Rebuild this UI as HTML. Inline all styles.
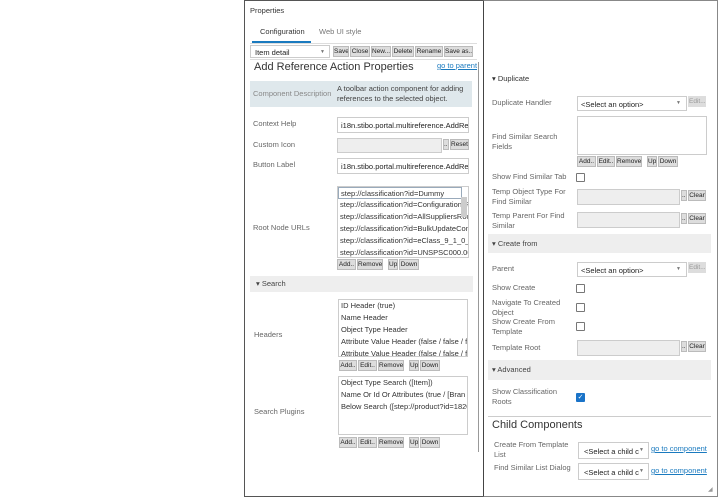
<!DOCTYPE html>
<html><head><meta charset="utf-8"><style>
*{box-sizing:border-box;margin:0;padding:0}
body{width:718px;height:497px;background:#fff;position:relative;overflow:hidden;font-family:"Liberation Sans",sans-serif;font-size:7.5px;color:#333}
.a{position:absolute;white-space:nowrap}
.lbl{position:absolute;color:#666;font-size:7.5px;line-height:10px;white-space:nowrap}
.inp{position:absolute;border:1px solid #ccc;background:#fff;font-size:7.5px;padding:3px 3px;line-height:9px;overflow:hidden;white-space:nowrap;color:#222}
.dis{background:#eee}
.btn{position:absolute;background:#ddd;border:1px solid #bbb;font-size:6.5px;line-height:9px;text-align:center;color:#222;height:11px;white-space:nowrap;overflow:hidden}
.hdr{position:absolute;background:#eee;color:#444;font-size:7.5px}
.cb{position:absolute;width:9px;height:9px;border:1px solid #777;border-radius:1px;background:#fff}
.lnk{position:absolute;color:#1a7abf;text-decoration:underline;font-size:7.5px;white-space:nowrap}
.list div{height:12px;line-height:12px;padding-left:2px;white-space:nowrap}
.arr{position:absolute;font-size:5px;color:#777}
</style></head><body>
<div class="a" style="left:244px;top:0;width:240px;height:497px;border:1px solid #555;border-right:1px solid #444"></div>
<div class="a" style="left:483px;top:0;width:235px;height:497px;border:1px solid #888;border-left:1px solid #444"></div>
<div class="a" style="left:478px;top:62px;width:1px;height:390px;background:#999"></div>

<div class="a" style="left:250px;top:6px">Properties</div>
<div class="a" style="left:260px;top:27px">Configuration</div>
<div class="a" style="left:319px;top:27px;color:#777">Web UI style</div>
<div class="a" style="left:252px;top:41px;width:59px;height:2px;background:#1a7abf"></div>
<div class="a" style="left:250px;top:43px;width:227px;height:1px;background:#ddd"></div>

<div class="inp" style="left:250px;top:45px;width:80px;height:13px;padding:2px 4px">Item detail</div>
<div class="arr" style="left:320px;top:49px">▼</div>
<div class="btn" style="left:333px;top:46px;width:16px">Save</div>
<div class="btn" style="left:350px;top:46px;width:20px">Close</div>
<div class="btn" style="left:371px;top:46px;width:20px">New...</div>
<div class="btn" style="left:392px;top:46px;width:22px">Delete</div>
<div class="btn" style="left:415px;top:46px;width:28px">Rename</div>
<div class="btn" style="left:444px;top:46px;width:29px">Save as...</div>
<div class="a" style="left:250px;top:59px;width:227px;height:1px;background:#ddd"></div>

<div class="a" style="left:254px;top:61px;font-size:11px;color:#333">Add Reference Action Properties</div>
<div class="lnk" style="left:437px;top:61px">go to parent</div>

<div class="a" style="left:250px;top:81px;width:222px;height:26px;background:#dfe8ec"></div>
<div class="lbl" style="left:253px;top:89px;color:#888">Component Description</div>
<div class="a" style="left:337px;top:84px;line-height:10px;color:#444">A toolbar action component for adding<br>references to the selected object.</div>

<div class="lbl" style="left:253px;top:119px">Context Help</div>
<div class="inp" style="left:337px;top:117px;width:132px;height:16px">i18n.stibo.portal.multireference.AddRefe</div>
<div class="lbl" style="left:253px;top:140px">Custom Icon</div>
<div class="inp dis" style="left:337px;top:138px;width:105px;height:15px"></div>
<div class="btn" style="left:443px;top:139px;width:6px">...</div>
<div class="btn" style="left:450px;top:139px;width:19px">Reset</div>
<div class="lbl" style="left:253px;top:160px">Button Label</div>
<div class="inp" style="left:337px;top:158px;width:132px;height:16px">i18n.stibo.portal.multireference.AddRefe</div>

<div class="lbl" style="left:253px;top:223px">Root Node URLs</div>
<div class="a list" style="left:337px;top:186px;width:132px;height:72px;border:1px solid #ccc;overflow:hidden">
<div style="border:1px solid #9ab;width:124px">step://classification?id=Dummy</div>
<div>step://classification?id=ConfigurationsR</div>
<div>step://classification?id=AllSuppliersRoot</div>
<div>step://classification?id=BulkUpdateConf</div>
<div>step://classification?id=eClass_9_1_0_0</div>
<div>step://classification?id=UNSPSC000.000</div>
</div>
<div class="a" style="left:461px;top:197px;width:6px;height:20px;background:#ccc"></div>
<div class="btn" style="left:337px;top:259px;width:19px">Add..</div>
<div class="btn" style="left:357px;top:259px;width:26px">Remove</div>
<div class="btn" style="left:388px;top:259px;width:10px">Up</div>
<div class="btn" style="left:399px;top:259px;width:20px">Down</div>

<div class="hdr" style="left:250px;top:276px;width:223px;height:16px;padding:3px 6px">▾ Search</div>

<div class="lbl" style="left:254px;top:330px">Headers</div>
<div class="a list" style="left:338px;top:299px;width:130px;height:58px;border:1px solid #ccc;overflow:hidden">
<div>ID Header (true)</div><div>Name Header</div><div>Object Type Header</div><div>Attribute Value Header (false / false / f</div><div>Attribute Value Header (false / false / f</div></div>
<div class="btn" style="left:339px;top:360px;width:18px">Add..</div>
<div class="btn" style="left:358px;top:360px;width:19px">Edit..</div>
<div class="btn" style="left:378px;top:360px;width:26px">Remove</div>
<div class="btn" style="left:409px;top:360px;width:10px">Up</div>
<div class="btn" style="left:420px;top:360px;width:20px">Down</div>

<div class="lbl" style="left:254px;top:407px">Search Plugins</div>
<div class="a list" style="left:338px;top:376px;width:130px;height:59px;border:1px solid #ccc;overflow:hidden">
<div>Object Type Search ([Item])</div><div>Name Or Id Or Attributes (true / [Bran</div><div>Below Search ([step://product?id=1820</div></div>
<div class="btn" style="left:339px;top:437px;width:18px">Add..</div>
<div class="btn" style="left:358px;top:437px;width:19px">Edit..</div>
<div class="btn" style="left:378px;top:437px;width:26px">Remove</div>
<div class="btn" style="left:409px;top:437px;width:10px">Up</div>
<div class="btn" style="left:420px;top:437px;width:20px">Down</div>

<div class="a" style="left:492px;top:74px">▾ Duplicate</div>
<div class="lbl" style="left:492px;top:98px">Duplicate Handler</div>
<div class="inp" style="left:577px;top:96px;width:110px;height:15px">&lt;Select an option&gt;</div>
<div class="arr" style="left:676px;top:100px">▼</div>
<div class="btn" style="left:688px;top:96px;width:18px;color:#999;border-color:#ddd">Edit...</div>
<div class="lbl" style="left:492px;top:132px">Find Similar Search<br>Fields</div>
<div class="inp" style="left:577px;top:116px;width:130px;height:39px"></div>
<div class="btn" style="left:577px;top:156px;width:19px">Add..</div>
<div class="btn" style="left:597px;top:156px;width:18px">Edit..</div>
<div class="btn" style="left:616px;top:156px;width:26px">Remove</div>
<div class="btn" style="left:647px;top:156px;width:10px">Up</div>
<div class="btn" style="left:658px;top:156px;width:20px">Down</div>
<div class="lbl" style="left:492px;top:172px">Show Find Similar Tab</div>
<div class="cb" style="left:576px;top:173px"></div>
<div class="lbl" style="left:492px;top:187px">Temp Object Type For<br>Find Similar</div>
<div class="inp dis" style="left:577px;top:189px;width:103px;height:16px"></div>
<div class="btn" style="left:681px;top:190px;width:6px">...</div>
<div class="btn" style="left:688px;top:190px;width:18px">Clear</div>
<div class="lbl" style="left:492px;top:211px">Temp Parent For Find<br>Similar</div>
<div class="inp dis" style="left:577px;top:212px;width:103px;height:16px"></div>
<div class="btn" style="left:681px;top:213px;width:6px">...</div>
<div class="btn" style="left:688px;top:213px;width:18px">Clear</div>

<div class="hdr" style="left:488px;top:234px;width:223px;height:19px;padding:5px 4px">▾ Create from</div>
<div class="lbl" style="left:492px;top:264px">Parent</div>
<div class="inp" style="left:577px;top:262px;width:110px;height:15px">&lt;Select an option&gt;</div>
<div class="arr" style="left:676px;top:266px">▼</div>
<div class="btn" style="left:688px;top:262px;width:18px;color:#999;border-color:#ddd">Edit...</div>
<div class="lbl" style="left:492px;top:283px">Show Create</div>
<div class="cb" style="left:576px;top:284px"></div>
<div class="lbl" style="left:492px;top:298px">Navigate To Created<br>Object</div>
<div class="cb" style="left:576px;top:303px"></div>
<div class="lbl" style="left:492px;top:317px">Show Create From<br>Template</div>
<div class="cb" style="left:576px;top:322px"></div>
<div class="lbl" style="left:492px;top:343px">Template Root</div>
<div class="inp dis" style="left:577px;top:340px;width:103px;height:16px"></div>
<div class="btn" style="left:681px;top:341px;width:6px">...</div>
<div class="btn" style="left:688px;top:341px;width:18px">Clear</div>

<div class="hdr" style="left:488px;top:360px;width:223px;height:20px;padding:5px 4px">▾ Advanced</div>
<div class="lbl" style="left:492px;top:387px">Show Classification<br>Roots</div>
<div class="cb" style="left:576px;top:393px;background:#1a73c8;border-color:#1a73c8;color:#fff;font-size:7px;line-height:7px;text-align:center">✓</div>
<div class="a" style="left:488px;top:416px;width:223px;height:1px;background:#ccc"></div>
<div class="a" style="left:492px;top:419px;font-size:11px;color:#333">Child Components</div>
<div class="lbl" style="left:494px;top:440px">Create From Template<br>List</div>
<div class="inp" style="left:578px;top:442px;width:71px;height:17px;padding:4px 5px">&lt;Select a child c</div>
<div class="arr" style="left:639px;top:447px">▼</div>
<div class="lnk" style="left:651px;top:444px">go to component</div>
<div class="lbl" style="left:494px;top:463px">Find Similar List Dialog</div>
<div class="inp" style="left:578px;top:463px;width:71px;height:17px;padding:4px 5px">&lt;Select a child c</div>
<div class="arr" style="left:639px;top:468px">▼</div>
<div class="lnk" style="left:651px;top:466px">go to component</div>
<div class="a" style="left:708px;top:486px;font-size:6px;color:#999">◢</div>
</body></html>
